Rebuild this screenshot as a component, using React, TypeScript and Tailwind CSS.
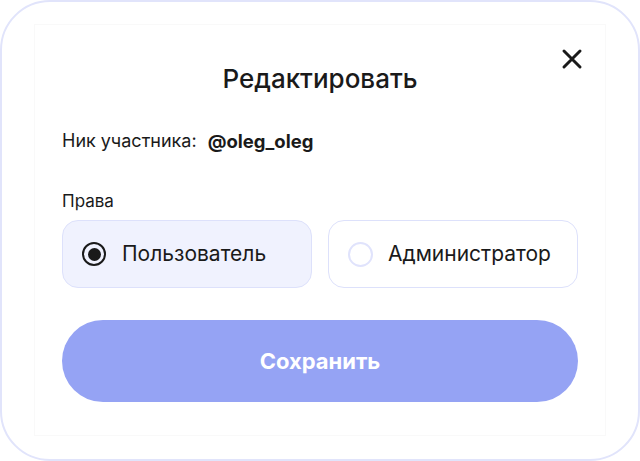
import React from "react";

export default function App() {
  return (
    <div className="w-[640px] h-[461px] bg-white" style={{ fontFamily: "Inter, 'Noto Sans', sans-serif" }}>
      <div className="w-full h-full rounded-[50px] border-2 border-[#e1e4fb] pt-[22px] pb-[23px] px-[32px] flex">
        <div className="relative flex-1 border border-[#f9f9f9] px-[27px] pt-[40px] flex flex-col">
          <button className="absolute right-[22px] top-[23px] w-[22px] h-[22px] flex items-center justify-center text-[#1a1a1a]">
            <svg width="22" height="22" viewBox="0 0 22 22" fill="none">
              <path d="M3 3L19 19M19 3L3 19" stroke="currentColor" strokeWidth="3" strokeLinecap="round" />
            </svg>
          </button>
          <h1 className="text-center text-[26px] leading-[28px] font-medium text-[#1a1a1a]">Редактировать</h1>
          <div className="mt-[36px] flex items-center text-[18px] leading-[24px] text-[#1a1a1a]">
            <span>Ник участника:</span>
            <span className="ml-[11px] text-[18.5px] font-bold">@oleg_oleg</span>
          </div>
          <div className="mt-[37px] text-[17px] leading-[22px] text-[#1a1a1a]">Права</div>
          <div className="mt-[8px] grid grid-cols-2 gap-[16px]">
            <label className="h-[68px] rounded-[16px] border border-[#dde1fb] bg-[#f0f2fe] flex items-center pl-[19px] gap-[16px]">
              <span className="w-[24px] h-[24px] rounded-full border-2 border-[#1a1a1a] flex items-center justify-center">
                <span className="w-[13px] h-[13px] rounded-full bg-[#1a1a1a]" />
              </span>
              <span className="text-[21px] text-[#1a1a1a]">Пользователь</span>
            </label>
            <label className="h-[68px] rounded-[16px] border border-[#dde1fb] bg-white flex items-center pl-[19px] gap-[15px]">
              <span className="w-[25px] h-[25px] rounded-full border-2 border-[#e0e3fc]" />
              <span className="text-[21px] text-[#1a1a1a]">Администратор</span>
            </label>
          </div>
          <button className="mt-[32px] h-[82px] rounded-full bg-[#95a3f4] text-white text-[22px] font-bold">
            Сохранить
          </button>
        </div>
      </div>
    </div>
  );
}
